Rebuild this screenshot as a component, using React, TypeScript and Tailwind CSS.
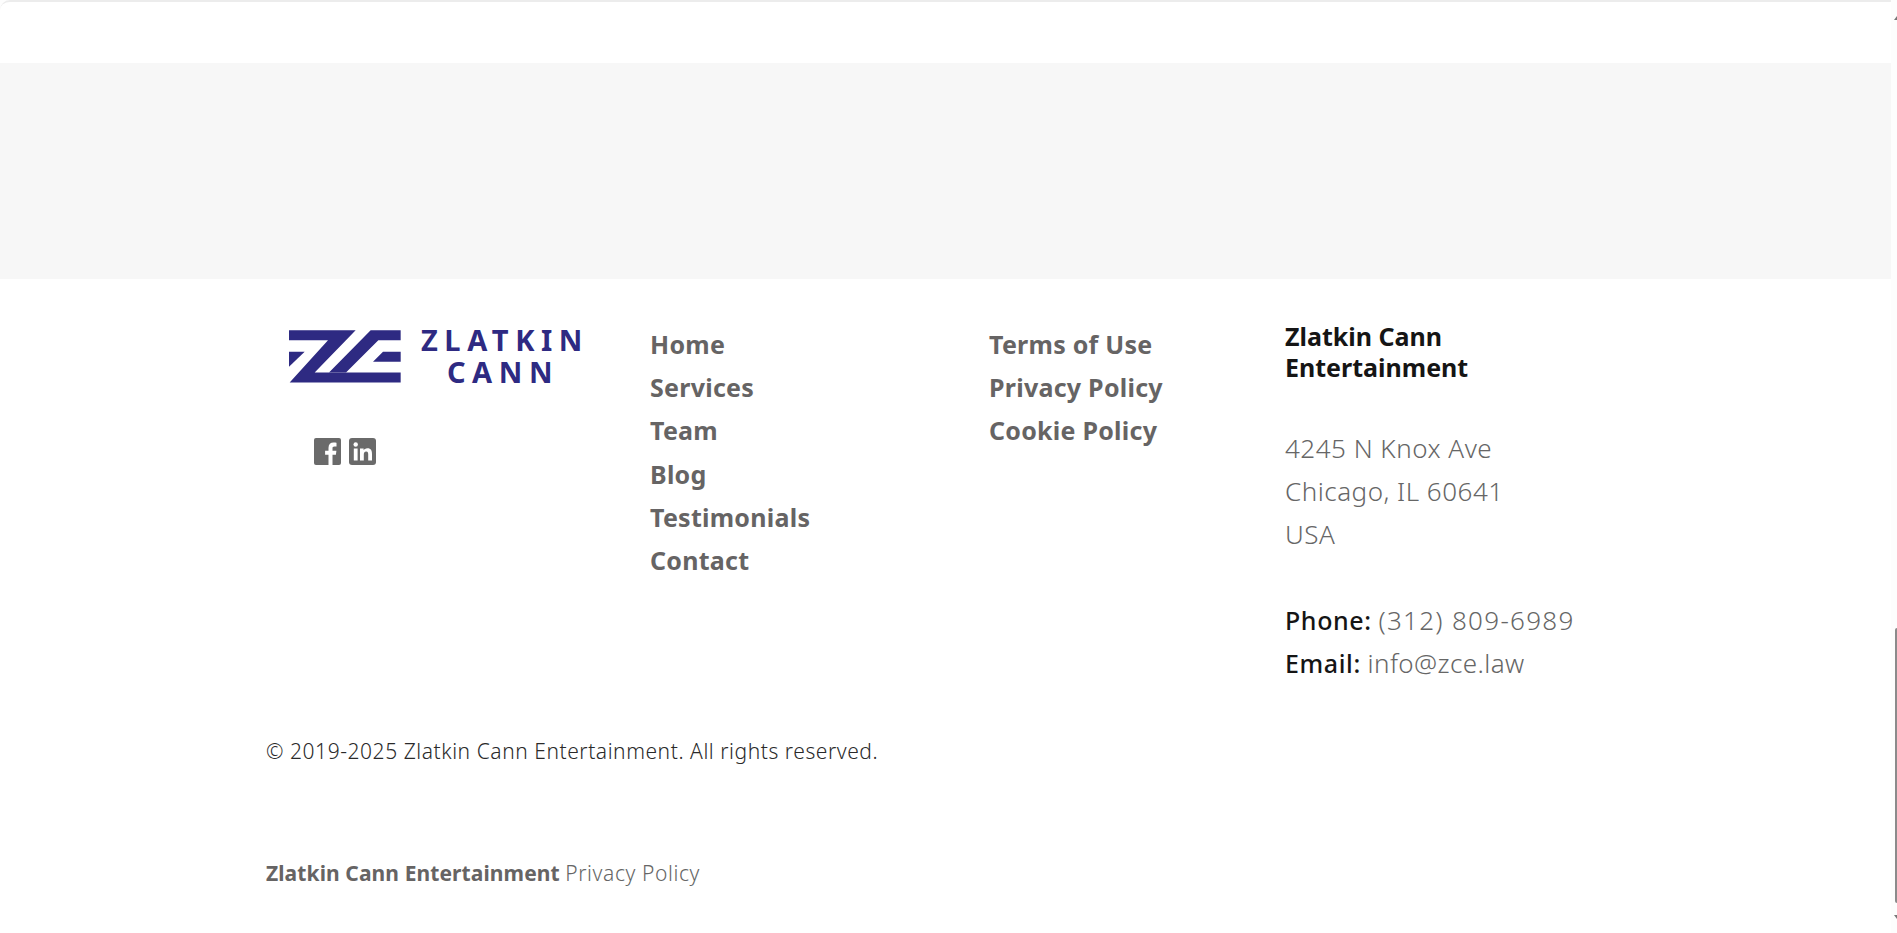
const sans = "font-['Noto_Sans',sans-serif]";

function LogoMark() {
  return (
    <svg width="112" height="53" viewBox="58 60 336 158" className="shrink-0">
      <g fill="#2e2a82">
        <polygon points="58,60 258,60 135,187 393,187 393,217 60,217 175,90 58,90" />
        <polygon points="303,60 393,60 393,90 326,90 229,187 178,187" />
        <polygon points="340,125 393,125 393,155 310,155" />
        <polygon points="58,125 105,125 58,170" />
      </g>
    </svg>
  );
}

function Facebook() {
  return (
    <svg width="27" height="27" viewBox="0 0 27 27">
      <rect width="27" height="27" rx="2" fill="#6a6a6a" />
      <path d="M18.500 27V16.800h3.400l.5-4h-3.900v-2.500c0-1.200.3-1.900 2-1.900h2V4.800c-.4 0-1.600-.2-3-.2-3 0-5 1.800-5 5.200v3h-3.400v4h3.400V27z" fill="#fff" />
    </svg>
  );
}

function Linkedin() {
  return (
    <svg width="27" height="27" viewBox="0 0 27 27">
      <rect width="27" height="27" rx="3" fill="#6a6a6a" />
      <circle cx="6.700" cy="6.500" r="2.200" fill="#fff" />
      <rect x="4.800" y="10.500" width="3.800" height="12" fill="#fff" />
      <path d="M11 10.500h3.600v1.700c.6-1 1.900-2 3.800-2 3.700 0 4.600 2.400 4.600 5.700v6.600h-3.800v-5.900c0-1.500-.1-3.200-2-3.200s-2.400 1.500-2.400 3.100v6H11z" fill="#fff" />
    </svg>
  );
}

const nav1 = ["Home", "Services", "Team", "Blog", "Testimonials", "Contact"];
const nav2 = ["Terms of Use", "Privacy Policy", "Cookie Policy"];

function NavList({ items }: { items: string[] }) {
  return (
    <ul className="flex flex-col">
      {items.map((t) => (
        <li key={t} className="h-[43.200px] text-[25px] leading-[43.200px] font-bold tracking-[0.250px] text-[#666464] whitespace-nowrap">
          {t}
        </li>
      ))}
    </ul>
  );
}

export default function App() {
  return (
    <div className={`${sans} h-[933px] overflow-hidden bg-[#fdfdfd] flex`}>
      <div className="flex-1 min-w-0 bg-white rounded-tl-[10px] border-t-2 border-[#ececec] h-[933px] flex flex-col">
        <div className="h-[61px] shrink-0" />
        <div className="h-[216px] shrink-0 bg-[#f7f7f7]" />
        <footer className="flex-1 flex flex-col pl-[266px]">
          <div className="flex h-[458px] pt-[44px]">
            <div className="w-[384px] pl-[23px] pt-[7px]">
              <div className="flex gap-[19px]">
                <LogoMark />
                <div className="text-[#2e2a82] font-bold text-[29px] leading-[32px] tracking-[6.600px] text-center w-[170px] -mt-[6px] whitespace-nowrap">
                  <div>ZLATKIN</div>
                  <div className="pr-[4px]">CANN</div>
                </div>
              </div>
              <div className="flex gap-[8px] mt-[50px] ml-[25px]">
                <Facebook />
                <Linkedin />
              </div>
            </div>
            <div className="w-[339px]">
              <NavList items={nav1} />
            </div>
            <div className="w-[296px]">
              <NavList items={nav2} />
            </div>
            <div className="w-[340px] -mt-[2.500px]">
              <h3 className="text-[25px] leading-[31.500px] font-bold text-[#151515]">
                Zlatkin Cann
                <br />
                Entertainment
              </h3>
              <div className="mt-[43px] text-[26px] leading-[43.200px] font-light tracking-[0.500px] text-[#666666]">
                <div>4245 N Knox Ave</div>
                <div>Chicago, IL 60641</div>
                <div>USA</div>
              </div>
              <div className="mt-[43px] text-[26px] leading-[43.200px] font-light text-[#666666]">
                <div>
                  <span className="font-medium text-[25px] tracking-[0.600px] text-[#151515]">Phone:</span>{" "}
                  <span className="tracking-[1.300px]">(312) 809-6989</span>
                </div>
                <div>
                  <span className="font-medium text-[25px] tracking-[0.600px] text-[#151515]">Email:</span>{" "}
                  <span className="tracking-[0.400px]">info@zce.law</span>
                </div>
              </div>
            </div>
          </div>
          <p className="text-[21px] leading-[28px] tracking-[0.550px] text-[#2a2a2a] font-light">
            © 2019-2025 Zlatkin Cann Entertainment. All rights reserved.
          </p>
          <p className="mt-[93px] text-[21px] leading-[30px] font-light text-[#666666]">
            <span className="font-bold tracking-[0.100px] text-[#666464]">Zlatkin Cann Entertainment</span>{" "}
            <span className="tracking-[0.600px]">Privacy Policy</span>
          </p>
        </footer>
      </div>
      <div className="w-[6px] shrink-0 bg-[#fdfdfd] flex flex-col items-end">
        <div className="h-[16px]" />
        <svg width="3" height="4" viewBox="0 0 3 4">
          <polygon points="3,0 3,4 0,4" fill="#777777" />
        </svg>
        <div className="h-[608px]" />
        <div className="w-[2px] h-[275px] bg-[#8b8b8b] rounded-l-[2px]" />
        <div className="h-[12px]" />
        <svg width="3" height="4" viewBox="0 0 3 4">
          <polygon points="0,0 3,0 3,4" fill="#777777" />
        </svg>
      </div>
    </div>
  );
}
